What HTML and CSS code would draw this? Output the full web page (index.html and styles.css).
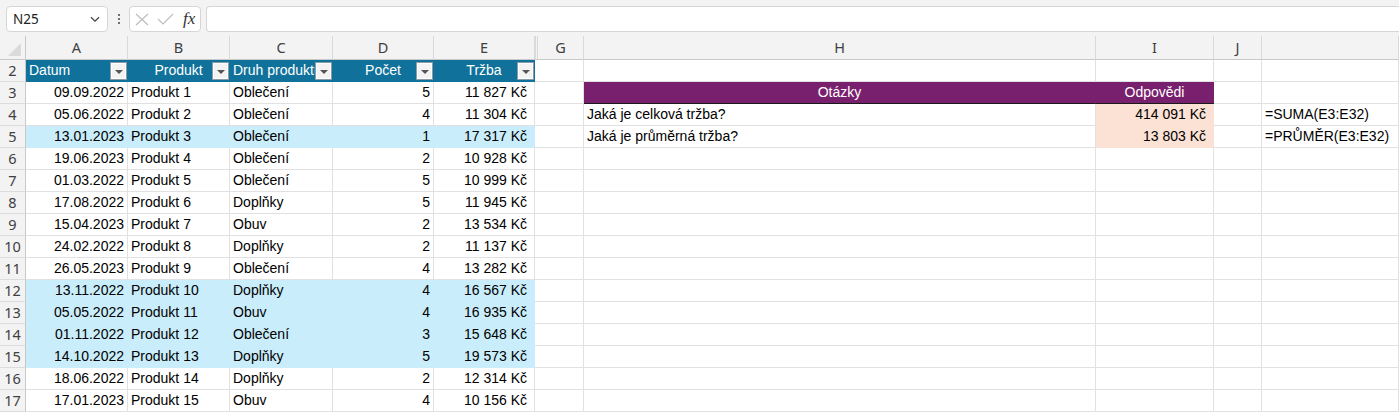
FILE: index.html
```html
<!DOCTYPE html>
<html lang="cs">
<head>
<meta charset="utf-8">
<title>Tržby</title>
<link rel="stylesheet" href="styles.css">
</head>
<body>
<div class="app">
  <div class="fbar">
    <div class="namebox">
      <span class="nb-text">N25</span>
      <svg class="chev" width="10" height="7" viewBox="0 0 10 7"><path d="M1 1.2 L5 5.2 L9 1.2" fill="none" stroke="#444" stroke-width="1.3"/></svg>
    </div>
    <div class="dots"><i></i><i></i><i></i></div>
    <div class="fxbox">
      <svg width="16" height="13" viewBox="0 0 16 13"><path d="M2 1 L14 12 M14 1 L2 12" stroke="#bdbdbd" stroke-width="1.2" fill="none"/></svg>
      <svg width="17" height="12" viewBox="0 0 17 12"><path d="M1 6 L6 11 L16 1" stroke="#bdbdbd" stroke-width="1.2" fill="none"/></svg>
      <span class="fx">fx</span>
    </div>
    <div class="finput"></div>
  </div>

  <div class="sheet">
    <div class="row colhdr">
      <div class="corner"><span class="tri"></span></div>
      <div class="ch">A</div><div class="ch">B</div><div class="ch">C</div><div class="ch">D</div><div class="ch">E</div>
      <div class="ch hid"></div>
      <div class="ch">G</div><div class="ch">H</div><div class="ch">I</div><div class="ch">J</div><div class="ch"></div>
    </div>

    <div class="row">
      <div class="rh">2</div>
      <div class="c th left">Datum<span class="fb"></span></div>
      <div class="c th center">Produkt<span class="fb"></span></div>
      <div class="c th left">Druh produktu<span class="fb"></span></div>
      <div class="c th center">Počet<span class="fb"></span></div>
      <div class="c th center">Tržba<span class="fb"></span></div>
      <div class="c f"></div><div class="c"></div><div class="c"></div><div class="c"></div><div class="c"></div><div class="c"></div>
    </div>

    <div class="row">
      <div class="rh">3</div>
      <div class="c r">09.09.2022</div><div class="c">Produkt 1</div><div class="c">Oblečení</div><div class="c r">5</div><div class="c r">11 827 Kč</div>
      <div class="c f"></div><div class="c"></div>
      <div class="c ph center">Otázky</div><div class="c ph center">Odpovědi</div>
      <div class="c"></div><div class="c"></div>
    </div>

    <div class="row">
      <div class="rh">4</div>
      <div class="c r">05.06.2022</div><div class="c">Produkt 2</div><div class="c">Oblečení</div><div class="c r">4</div><div class="c r">11 304 Kč</div>
      <div class="c f"></div><div class="c"></div>
      <div class="c">Jaká je celková tržba?</div><div class="c r peach">414 091 Kč</div>
      <div class="c"></div><div class="c">=SUMA(E3:E32)</div>
    </div>

    <div class="row hl">
      <div class="rh">5</div>
      <div class="c r">13.01.2023</div><div class="c">Produkt 3</div><div class="c">Oblečení</div><div class="c r">1</div><div class="c r">17 317 Kč</div>
      <div class="c f"></div><div class="c"></div>
      <div class="c">Jaká je průměrná tržba?</div><div class="c r peach">13 803 Kč</div>
      <div class="c"></div><div class="c">=PRŮMĚR(E3:E32)</div>
    </div>

    <div class="row">
      <div class="rh">6</div>
      <div class="c r">19.06.2023</div><div class="c">Produkt 4</div><div class="c">Oblečení</div><div class="c r">2</div><div class="c r">10 928 Kč</div>
      <div class="c f"></div><div class="c"></div><div class="c"></div><div class="c"></div><div class="c"></div><div class="c"></div>
    </div>

    <div class="row">
      <div class="rh">7</div>
      <div class="c r">01.03.2022</div><div class="c">Produkt 5</div><div class="c">Oblečení</div><div class="c r">5</div><div class="c r">10 999 Kč</div>
      <div class="c f"></div><div class="c"></div><div class="c"></div><div class="c"></div><div class="c"></div><div class="c"></div>
    </div>

    <div class="row">
      <div class="rh">8</div>
      <div class="c r">17.08.2022</div><div class="c">Produkt 6</div><div class="c">Doplňky</div><div class="c r">5</div><div class="c r">11 945 Kč</div>
      <div class="c f"></div><div class="c"></div><div class="c"></div><div class="c"></div><div class="c"></div><div class="c"></div>
    </div>

    <div class="row">
      <div class="rh">9</div>
      <div class="c r">15.04.2023</div><div class="c">Produkt 7</div><div class="c">Obuv</div><div class="c r">2</div><div class="c r">13 534 Kč</div>
      <div class="c f"></div><div class="c"></div><div class="c"></div><div class="c"></div><div class="c"></div><div class="c"></div>
    </div>

    <div class="row">
      <div class="rh">10</div>
      <div class="c r">24.02.2022</div><div class="c">Produkt 8</div><div class="c">Doplňky</div><div class="c r">2</div><div class="c r">11 137 Kč</div>
      <div class="c f"></div><div class="c"></div><div class="c"></div><div class="c"></div><div class="c"></div><div class="c"></div>
    </div>

    <div class="row">
      <div class="rh">11</div>
      <div class="c r">26.05.2023</div><div class="c">Produkt 9</div><div class="c">Oblečení</div><div class="c r">4</div><div class="c r">13 282 Kč</div>
      <div class="c f"></div><div class="c"></div><div class="c"></div><div class="c"></div><div class="c"></div><div class="c"></div>
    </div>

    <div class="row hl">
      <div class="rh">12</div>
      <div class="c r">13.11.2022</div><div class="c">Produkt 10</div><div class="c">Doplňky</div><div class="c r">4</div><div class="c r">16 567 Kč</div>
      <div class="c f"></div><div class="c"></div><div class="c"></div><div class="c"></div><div class="c"></div><div class="c"></div>
    </div>

    <div class="row hl">
      <div class="rh">13</div>
      <div class="c r">05.05.2022</div><div class="c">Produkt 11</div><div class="c">Obuv</div><div class="c r">4</div><div class="c r">16 935 Kč</div>
      <div class="c f"></div><div class="c"></div><div class="c"></div><div class="c"></div><div class="c"></div><div class="c"></div>
    </div>

    <div class="row hl">
      <div class="rh">14</div>
      <div class="c r">01.11.2022</div><div class="c">Produkt 12</div><div class="c">Oblečení</div><div class="c r">3</div><div class="c r">15 648 Kč</div>
      <div class="c f"></div><div class="c"></div><div class="c"></div><div class="c"></div><div class="c"></div><div class="c"></div>
    </div>

    <div class="row hl">
      <div class="rh">15</div>
      <div class="c r">14.10.2022</div><div class="c">Produkt 13</div><div class="c">Doplňky</div><div class="c r">5</div><div class="c r">19 573 Kč</div>
      <div class="c f"></div><div class="c"></div><div class="c"></div><div class="c"></div><div class="c"></div><div class="c"></div>
    </div>

    <div class="row">
      <div class="rh">16</div>
      <div class="c r">18.06.2022</div><div class="c">Produkt 14</div><div class="c">Doplňky</div><div class="c r">2</div><div class="c r">12 314 Kč</div>
      <div class="c f"></div><div class="c"></div><div class="c"></div><div class="c"></div><div class="c"></div><div class="c"></div>
    </div>

    <div class="row">
      <div class="rh">17</div>
      <div class="c r">17.01.2023</div><div class="c">Produkt 15</div><div class="c">Obuv</div><div class="c r">4</div><div class="c r">10 156 Kč</div>
      <div class="c f"></div><div class="c"></div><div class="c"></div><div class="c"></div><div class="c"></div><div class="c"></div>
    </div>
  </div>
</div>
</body>
</html>
```

FILE: styles.css
```css
* { box-sizing: border-box; }
html, body { margin: 0; padding: 0; }
body {
  background: #f3f3f3;
  font-family: "Liberation Sans", Arial, sans-serif;
  font-size: 14px;
  color: #000;
  overflow: hidden;
}
.app { width: 1399px; height: 412px; overflow: hidden; }

/* formula bar */
.fbar {
  height: 36px;
  padding: 6px 0 0 6px;
  display: flex;
  align-items: flex-start;
}
.namebox {
  width: 102px; height: 26px;
  background: #fff;
  border: 1px solid #d6d6d6;
  border-radius: 4px;
  display: flex; align-items: center;
  padding: 0 7px 0 6px;
  justify-content: space-between;
}
.nb-text { font-family: "Noto Sans", sans-serif; font-size: 13.5px; color: #222; }
.dots {
  width: 21px; height: 26px;
  display: flex; flex-direction: column; align-items: center; justify-content: center; gap: 2px;
}
.dots i { display: block; width: 2px; height: 2px; background: #444; border-radius: 1px; }
.fxbox {
  width: 72px; height: 26px;
  background: #fff;
  border: 1px solid #d6d6d6;
  border-radius: 4px;
  display: flex; align-items: center;
  padding: 0 0 0 4px;
  gap: 7px;
}
.fx {
  font-family: "Liberation Serif", "DejaVu Serif", serif;
  font-style: italic;
  font-size: 17px;
  color: #333;
  margin-left: 2px;
}
.finput {
  flex: 1;
  margin-left: 5px;
  height: 26px;
  background: #fff;
  border: 1px solid #d6d6d6;
  border-right: none;
  border-radius: 4px 0 0 4px;
}

/* sheet */
.sheet { background: #fff; }
.row {
  display: grid;
  grid-template-columns: 26px 102px 102px 103px 101px 101px 3px 46px 512px 118px 48px 1fr;
  height: 22px;
}
.colhdr { height: 24px; background: #f3f3f3; }
.corner {
  position: relative;
  border-right: 1px solid #c8c8c8;
  border-bottom: 1px solid #c8c8c8;
}
.tri {
  position: absolute; right: 4px; bottom: 3px;
  width: 0; height: 0;
  border-left: 13px solid transparent;
  border-bottom: 13px solid #dadada;
}
.ch {
  font-family: "Noto Sans", "Open Sans", sans-serif;
  font-size: 14.5px;
  color: #404040;
  text-align: center;
  line-height: 22px;
  border-right: 1px solid #d9d9d9;
  border-bottom: 1px solid #c8c8c8;
}
.ch.hid { border-left: 1px solid #d9d9d9; border-right: 1px solid #d9d9d9; }
.rh {
  background: #f3f3f3;
  font-family: "Noto Sans", "Open Sans", sans-serif;
  font-size: 14.5px;
  color: #404040;
  text-align: center;
  line-height: 21px;
  border-right: 1px solid #c8c8c8;
  border-bottom: 1px solid #dcdcdc;
}
.c {
  position: relative;
  border-right: 1px solid #e1e1e1;
  border-bottom: 1px solid #e1e1e1;
  padding: 0 3px;
  line-height: 21px;
  white-space: nowrap;
  overflow: hidden;
}
.c.f { border-right: none; }
.r { text-align: right; }
.left { text-align: left; }
.center { text-align: center; }
/* column E values: currency format keeps a trailing gap */
.row .c.r:nth-child(6) { padding-right: 7px; }

/* table header */
.th {
  background: #10729b;
  border-color: #10729b;
  color: #fff;
  overflow: hidden;
}
.fb {
  position: absolute;
  right: 0; top: 2px;
  width: 17px; height: 18px;
  background: #f3f3f3;
  border: 1px solid #8a9aa6;
  box-shadow: inset 0 0 0 1px #fff;
}
.fb::after {
  content: "";
  position: absolute;
  left: 4px; top: 7px;
  border-left: 4px solid transparent;
  border-right: 4px solid transparent;
  border-top: 4px solid #555;
}

/* highlighted table rows */
.hl .c:nth-child(-n+6) {
  background: #caedfb;
  border-color: #caedfb;
}

/* questions block */
.ph {
  background: #78206e;
  border-right-color: #78206e;
  border-bottom: 1px solid #1a1a1a;
  color: #fff;
}
.peach {
  background: #fbe2d5;
  border-color: #fbe2d5;
  padding-right: 7px;
}
```
